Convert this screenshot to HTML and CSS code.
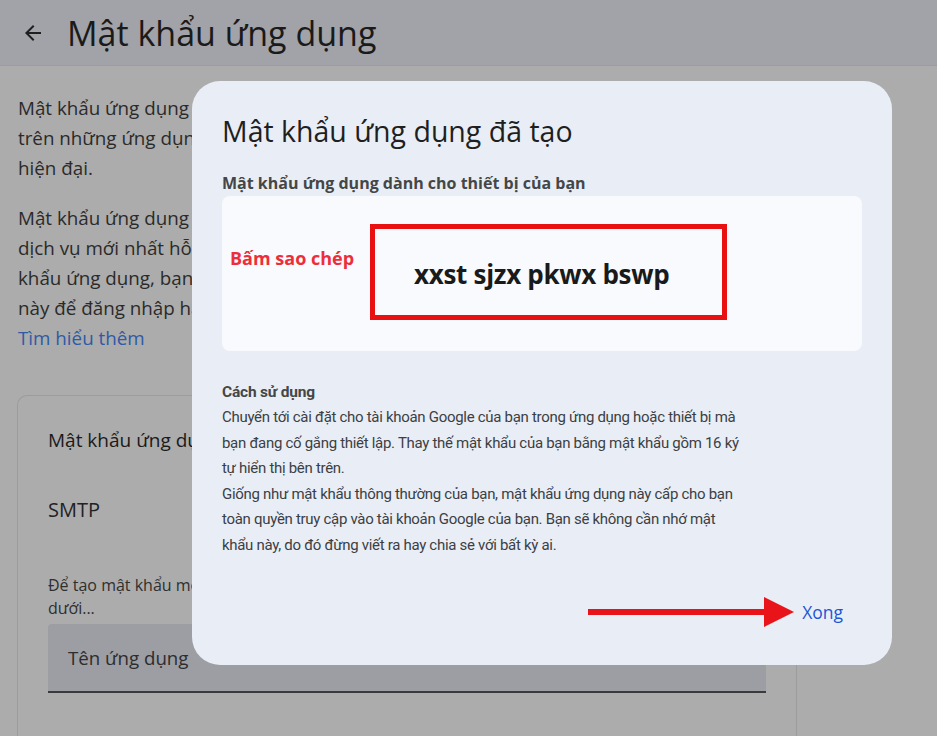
FILE: index.html
```html
<!DOCTYPE html>
<html lang="vi">
<head>
    <meta charset="UTF-8">
    <meta name="viewport" content="width=device-width, initial-scale=1.0">
    <title>Mật khẩu ứng dụng</title>
    <link rel="stylesheet" href="styles.css">
</head>
<body>
    <header class="topbar">
        <svg class="back-icon" width="24" height="24" viewBox="0 0 24 24">
            <path d="M20 11H7.83l5.59-5.59L12 4l-8 8 8 8 1.41-1.41L7.83 13H20v-2z" fill="#1f1f1f"/>
        </svg>
        <h1 class="page-title">Mật khẩu ứng dụng</h1>
    </header>

    <main class="content">
        <p class="intro">
            <span class="line">Mật khẩu ứng dụng giúp bạn đăng nhập vào Tài khoản Google</span>
            <span class="line">trên những ứng dụng và dịch vụ cũ không hỗ trợ các tiêu chuẩn bảo mật</span>
            <span class="line">hiện đại.</span>
        </p>
        <p class="intro">
            <span class="line">Mật khẩu ứng dụng kém an toàn hơn so với việc sử dụng các ứng dụng và</span>
            <span class="line">dịch vụ mới nhất hỗ trợ các tiêu chuẩn bảo mật hiện đại. Trước khi tạo mật</span>
            <span class="line">khẩu ứng dụng, bạn nên kiểm tra xem ứng dụng của mình có cần mật khẩu</span>
            <span class="line">này để đăng nhập hay không.</span>
            <a href="#" class="learn-more">Tìm hiểu thêm</a>
        </p>

        <section class="card">
            <h2 class="card-title">Mật khẩu ứng dụng của bạn</h2>
            <div class="card-item">SMTP</div>
            <p class="card-hint">Để tạo mật khẩu mới cho ứng dụng cụ thể, hãy nhập tên ứng dụng đó ở bên<br>dưới...</p>
            <div class="text-field">Tên ứng dụng</div>
        </section>
    </main>

    <div class="dialog">
        <h2 class="dialog-title">Mật khẩu ứng dụng đã tạo</h2>
        <div class="dialog-label">Mật khẩu ứng dụng dành cho thiết bị của bạn</div>
        <div class="password-box">
            <span class="copy-hint">Bấm sao chép</span>
            <div class="password-frame">
                <span class="password">xxst sjzx pkwx bswp</span>
            </div>
        </div>
        <div class="usage">
            <div class="usage-title">Cách sử dụng</div>
            <p class="usage-text">Chuyển tới cài đặt cho tài khoản Google của bạn trong ứng dụng hoặc thiết bị mà<br>bạn đang cố gắng thiết lập. Thay thế mật khẩu của bạn bằng mật khẩu gồm 16 ký<br>tự hiển thị bên trên.</p>
            <p class="usage-text">Giống như mật khẩu thông thường của bạn, mật khẩu ứng dụng này cấp cho bạn<br>toàn quyền truy cập vào tài khoản Google của bạn. Bạn sẽ không cần nhớ mật<br>khẩu này, do đó đừng viết ra hay chia sẻ với bất kỳ ai.</p>
        </div>
        <div class="dialog-actions">
            <svg class="arrow" width="208" height="32" viewBox="0 0 208 32">
                <rect x="0" y="13" width="180" height="6" fill="#e8141a"/>
                <polygon points="176,1 206,16 176,31" fill="#e8141a"/>
            </svg>
            <a href="#" class="done-button">Xong</a>
        </div>
    </div>
</body>
</html>
```

FILE: styles.css
```css
body {
    margin: 0;
    font-family: "Open Sans", Roboto, sans-serif;
    background-color: #acacac;
    color: #262626;
    height: 736px;
    overflow: hidden;
}
.topbar {
    height: 66px;
    display: flex;
    align-items: center;
    gap: 22px;
    padding-left: 21px;
    background-color: #a1a3a8;
    border-bottom: 1px solid #9c9c9e;
    box-sizing: border-box;
}
.back-icon {
    flex-shrink: 0;
}
.page-title {
    margin: 0;
    font-size: 34px;
    font-weight: 400;
    color: #1a1a1a;
}
.content {
    padding: 27px 0 0 18px;
}
.intro {
    margin: 0 0 20px;
    font-size: 18.8px;
    line-height: 30px;
    color: #2a2a2a;
}
.line {
    display: block;
    white-space: nowrap;
}
.learn-more {
    color: #2f5aa6;
    text-decoration: none;
}
.card {
    margin-top: 42px;
    width: 780px;
    height: 400px;
    box-sizing: border-box;
    margin-left: -1px;
    padding: 30px 30px 0;
    border: 1px solid #9c9c9c;
    border-bottom: none;
    border-radius: 10px 10px 0 0;
}
.card-title {
    margin: 0;
    font-size: 19px;
    font-weight: 500;
    line-height: 28px;
    color: #1a1a1a;
    white-space: nowrap;
}
.card-item {
    margin-top: 42px;
    font-size: 20px;
    line-height: 28px;
    color: #222;
}
.card-hint {
    margin: 50px 0 0;
    font-size: 16px;
    line-height: 23px;
    color: #2f2f2f;
}
.text-field {
    margin-top: 4px;
    height: 69px;
    display: flex;
    align-items: center;
    padding-left: 20px;
    font-size: 18.7px;
    color: #2d2d2d;
    background-color: #9c9ea3;
    border-bottom: 2px solid #3a3a3a;
    border-radius: 4px 4px 0 0;
    box-sizing: border-box;
}
.dialog {
    position: absolute;
    left: 192px;
    top: 81px;
    width: 700px;
    height: 584px;
    box-sizing: border-box;
    padding: 34px 30px 0;
    background-color: #e9eef6;
    border-radius: 28px;
}
.dialog-title {
    margin: 0;
    font-size: 28.5px;
    font-weight: 400;
    line-height: 32px;
    color: #1f1f1f;
}
.dialog-label {
    margin-top: 26px;
    font-size: 16px;
    font-weight: 700;
    line-height: 20px;
    color: #444746;
}
.password-box {
    margin-top: 3px;
    height: 155px;
    display: flex;
    align-items: flex-start;
    padding: 28px 0 0 8px;
    box-sizing: border-box;
    background-color: #f8fafd;
    border-radius: 8px;
}
.copy-hint {
    width: 140px;
    margin-top: 22px;
    font-size: 18px;
    font-weight: 700;
    color: #ee2d3a;
}
.password-frame {
    width: 357px;
    height: 96px;
    box-sizing: border-box;
    display: flex;
    align-items: center;
    padding: 4px 0 0 39px;
    border: 5px solid #e81010;
}
.password {
    font-size: 26px;
    font-weight: 700;
    color: #1a1a1a;
    letter-spacing: -0.3px;
}
.usage {
    margin-top: 29px;
    color: #3c4043;
    font-family: Roboto, "Open Sans", sans-serif;
}
.usage-title {
    font-size: 15.5px;
    font-weight: 700;
    line-height: 25px;
    letter-spacing: -0.2px;
    color: #444746;
}
.usage-text {
    margin: 0;
    font-size: 15px;
    line-height: 25.5px;
    letter-spacing: -0.3px;
    white-space: nowrap;
}
.dialog-actions {
    margin-top: 38px;
    display: flex;
    align-items: center;
    justify-content: flex-end;
    gap: 6px;
    padding-right: 19px;
}
.done-button {
    font-size: 17.5px;
    font-weight: 500;
    color: #1a56d6;
    text-decoration: none;
}
```
